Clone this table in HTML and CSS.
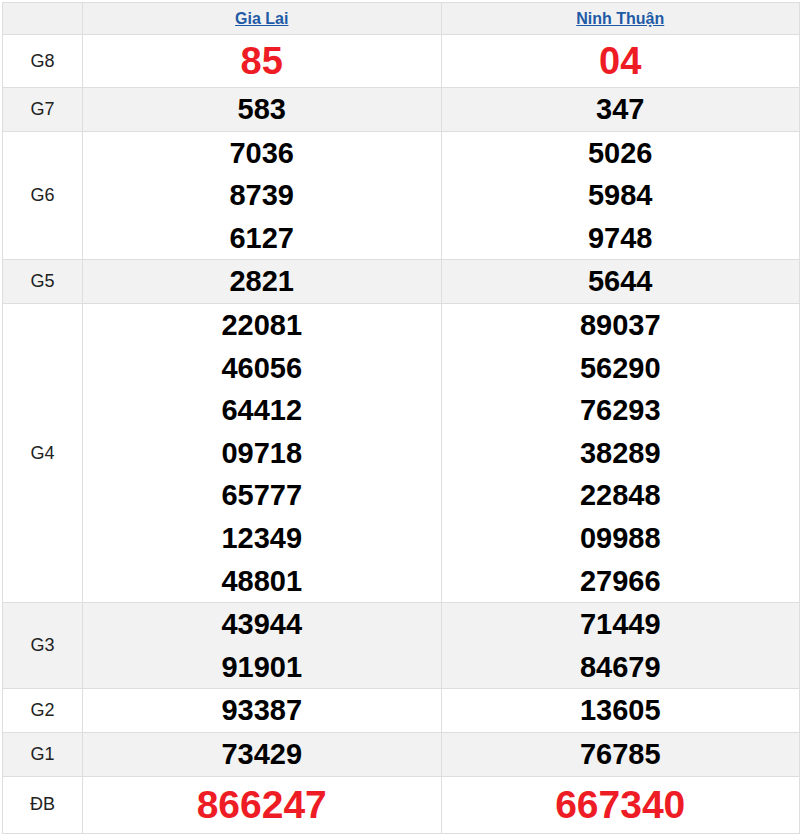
FILE: index.html
```html
<!DOCTYPE html>
<html>
<head>
<meta charset="utf-8">
<link rel="stylesheet" href="styles.css">
</head>
<body>
<table class="kq">
  <colgroup><col class="c-label"><col class="c-prov"><col class="c-prov"></colgroup>
  <tr class="head">
    <th></th>
    <th><a href="#">Gia Lai</a></th>
    <th><a href="#">Ninh Thuận</a></th>
  </tr>
  <tr class="g8">
    <td class="lbl">G8</td>
    <td><div class="n big">85</div></td>
    <td><div class="n big">04</div></td>
  </tr>
  <tr class="alt">
    <td class="lbl">G7</td>
    <td><div class="n">583</div></td>
    <td><div class="n">347</div></td>
  </tr>
  <tr>
    <td class="lbl">G6</td>
    <td><div class="n">7036</div><div class="n">8739</div><div class="n">6127</div></td>
    <td><div class="n">5026</div><div class="n">5984</div><div class="n">9748</div></td>
  </tr>
  <tr class="alt">
    <td class="lbl">G5</td>
    <td><div class="n">2821</div></td>
    <td><div class="n">5644</div></td>
  </tr>
  <tr>
    <td class="lbl">G4</td>
    <td><div class="n">22081</div><div class="n">46056</div><div class="n">64412</div><div class="n">09718</div><div class="n">65777</div><div class="n">12349</div><div class="n">48801</div></td>
    <td><div class="n">89037</div><div class="n">56290</div><div class="n">76293</div><div class="n">38289</div><div class="n">22848</div><div class="n">09988</div><div class="n">27966</div></td>
  </tr>
  <tr class="alt">
    <td class="lbl">G3</td>
    <td><div class="n">43944</div><div class="n">91901</div></td>
    <td><div class="n">71449</div><div class="n">84679</div></td>
  </tr>
  <tr>
    <td class="lbl">G2</td>
    <td><div class="n">93387</div></td>
    <td><div class="n">13605</div></td>
  </tr>
  <tr class="alt">
    <td class="lbl">G1</td>
    <td><div class="n">73429</div></td>
    <td><div class="n">76785</div></td>
  </tr>
  <tr class="db">
    <td class="lbl">ĐB</td>
    <td><div class="n huge">866247</div></td>
    <td><div class="n huge">667340</div></td>
  </tr>
</table>
</body>
</html>
```

FILE: styles.css
```css
html, body {
  margin: 0;
  padding: 0;
  background: #fff;
}
body {
  padding: 2px 0 0 2px;
  font-family: Arial, "Liberation Sans", sans-serif;
  color: #222;
}
.kq {
  border-collapse: collapse;
  width: 798px;
  table-layout: fixed;
}
.c-label { width: 80px; }
.kq th, .kq td {
  border: 1px solid #dedede;
  padding: 0;
  text-align: center;
  vertical-align: middle;
}
.head th {
  background: #f1f1f1;
  height: 31px;
  font-size: 16px;
  font-weight: bold;
}
.head a {
  color: #1f5aa6;
  text-decoration: underline;
}
.alt td { background: #f2f2f2; }
.lbl {
  font-size: 18px;
  color: #222;
}
.n {
  font-size: 29px;
  font-weight: bold;
  color: #000;
  line-height: 42.6px;
}
.n.big {
  font-size: 38px;
  line-height: 52px;
  color: #ee1c25;
}
.n.huge {
  font-size: 39px;
  line-height: 56px;
  color: #ee1c25;
}
```
